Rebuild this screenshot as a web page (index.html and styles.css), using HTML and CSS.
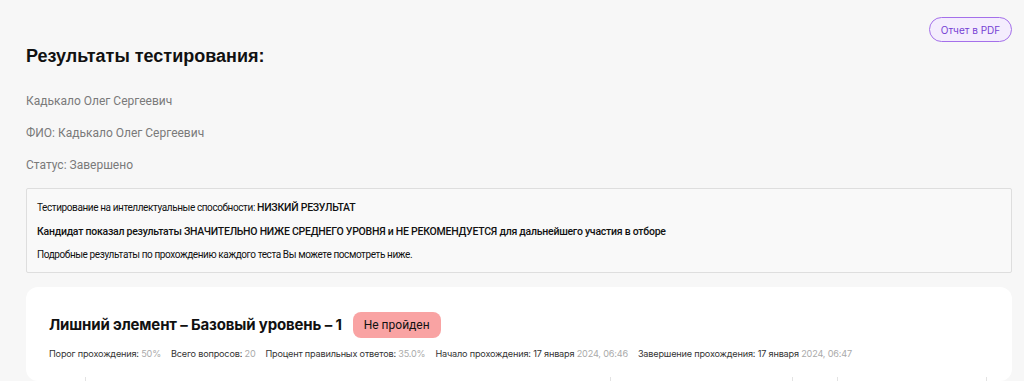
FILE: index.html
```html
<!DOCTYPE html>
<html lang="ru">
<head>
    <meta charset="UTF-8">
    <title>Результаты тестирования</title>
    <link rel="stylesheet" href="styles.css">
</head>
<body>
    <div class="page">
        <div class="toolbar">
            <button class="btn-pdf">Отчет в PDF</button>
        </div>
        <h1 class="title">Результаты тестирования:</h1>
        <p class="info">Кадькало Олег Сергеевич</p>
        <p class="info">ФИО: Кадькало Олег Сергеевич</p>
        <p class="info">Статус: Завершено</p>

        <div class="notice">
            <p>Тестирование на интеллектуальные способности: <b>НИЗКИЙ РЕЗУЛЬТАТ</b></p>
            <p class="strong">Кандидат показал результаты ЗНАЧИТЕЛЬНО НИЖЕ СРЕДНЕГО УРОВНЯ и НЕ РЕКОМЕНДУЕТСЯ для дальнейшего участия в отборе</p>
            <p>Подробные результаты по прохождению каждого теста Вы можете посмотреть ниже.</p>
        </div>

        <div class="card">
            <div class="card-head">
                <h2 class="card-title">Лишний элемент – Базовый уровень – 1</h2>
                <span class="badge-fail">Не пройден</span>
            </div>
            <div class="meta">
                <span>Порог прохождения: <em>50%</em></span>
                <span>Всего вопросов: <em>20</em></span>
                <span>Процент правильных ответов: <em>35.0%</em></span>
                <span>Начало прохождения: 17 января <em>2024, 06:46</em></span>
                <span>Завершение прохождения: 17 января <em>2024, 06:47</em></span>
            </div>
            <div class="chart">
                <i style="left:36px"></i>
                <i style="left:561px"></i>
                <i style="left:743px"></i>
                <i style="left:788px"></i>
                <i style="left:937px"></i>
            </div>
        </div>
    </div>
</body>
</html>
```

FILE: styles.css
```css
html,body{
    margin:0; padding:0; background:#f7f7f7;
}
.page{
    padding:17px 12px 0 26px;
    font-family:"Liberation Sans", Arial, sans-serif;
}
.toolbar{
    display:flex; justify-content:flex-end; height:24px;
}
.btn-pdf{
    width:83px; height:25px; border:1.5px solid #a470ea; border-radius:13px;
    background:#f4edfd; color:#7640d4; font-family:Inter, sans-serif; font-size:10px;
    padding:0; cursor:pointer;
}
.title{
    margin:2px 0 0 0; font-size:18px; font-weight:bold; color:#111; line-height:26px;
}
.info{
    margin:16px 0 0 0; font-size:12px; color:#7a7a7a; line-height:16px;
    font-family:Roboto, sans-serif;
}
.title + .info{
    margin-top:24px;
}
.notice{
    margin-top:15px; border:1px solid #dedede; border-radius:2px; background:#f9f9f9;
    padding:7px 10px 5px 10px; font-family:Roboto, sans-serif; font-size:10px; color:#111;
    letter-spacing:-0.4px;
}
.notice p{
    margin:0; line-height:23.5px;
}
.notice b,
.notice p.strong{
    font-weight:500; font-size:10.5px; letter-spacing:-0.25px;
}
.card{
    margin-top:14px; background:#fff; border-radius:12px;
    padding:25px 23px 0 23px; height:69px; overflow:hidden; position:relative;
    font-family:Inter, sans-serif;
}
.card-head{
    display:flex; align-items:center; gap:11px;
}
.card-title{
    margin:0; font-size:15px; font-weight:700; color:#111; letter-spacing:-0.15px;
}
.badge-fail{
    background:#f9a3a3; border-radius:8px; padding:0 11px; line-height:26px; font-size:12px; color:#111;
    font-family:Roboto, sans-serif;
}
.meta{
    display:flex; gap:10px; margin-top:10px; font-size:9.15px; line-height:12px; color:#333; letter-spacing:-0.18px;
}
.meta em{
    font-style:normal; color:#aaa;
}
.chart{
    position:relative; height:30px; margin-top:17px;
}
.chart i{
    position:absolute; top:0; bottom:0; width:1px; background:#e3e3e3;
}
```
